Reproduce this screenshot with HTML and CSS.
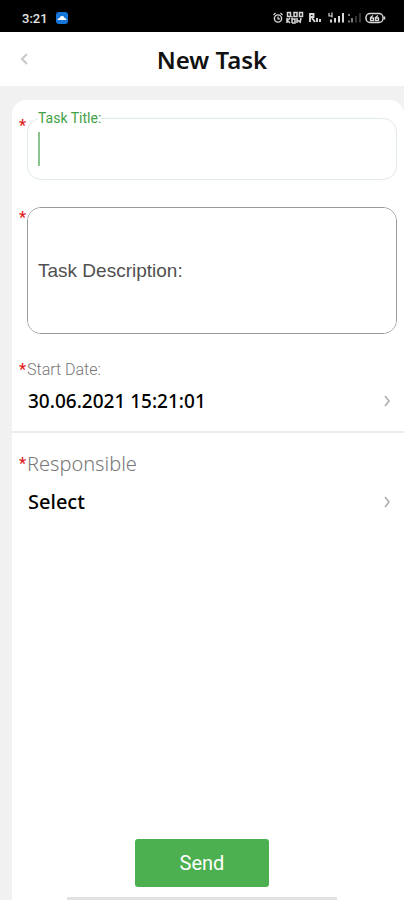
FILE: index.html
```html
<!DOCTYPE html>
<html lang="en">
<head>
<meta charset="UTF-8">
<meta name="viewport" content="width=device-width, initial-scale=1.0">
<title>New Task</title>
<link rel="stylesheet" href="styles.css">
</head>
<body>
    <div class="status-bar">
        <span class="clock">3:21</span>
        <svg class="app-icon" width="12" height="12" viewBox="0 0 12 12" aria-hidden="true">
            <rect width="12" height="12" rx="3" fill="#1675d8"/>
            <path d="M1.5 8 Q2 6 3.5 6 Q4.500 3.500 6.500 4 Q8 4.200 8.500 6 Q10.300 6.200 10.500 8 Z" fill="#fff"/>
        </svg>
        <svg class="status-icons" width="114" height="16" viewBox="0 0 114 16" fill="none" stroke="#d8d8d8" aria-hidden="true">
            <!-- alarm -->
            <circle cx="6" cy="8.500" r="3.600" stroke-width="1.400"/>
            <path d="M6 6.500v2.300h2M1.500 5l2-2M10.500 5l-2-2" stroke-width="1.200"/>
            <!-- network speed -->
            <g stroke-width="1.500">
                <rect x="15.500" y="2.500" width="3" height="4"/>
                <rect x="22" y="2.500" width="3" height="4"/>
                <rect x="27.500" y="2.500" width="3" height="4"/>
                <path d="M20 6v1.500M15 8v5M15 11l3-3M15 10l3 3M20 8v5M20 9h3v4h-3M25 8v5M25 11h3M29 8l-1 5"/>
            </g>
            <!-- call -->
            <path d="M38 3v9M38 4h3.500v3H38M40 8l3 4M45 8v4M48 9v3" stroke-width="1.900"/>
            <!-- signal -->
            <path d="M57 3v3h3M60 2.500v5" stroke-width="1.200"/>
            <path d="M59 9.500v3M63 8v4.500M67 6v6.500M71 3v9.500" stroke-width="2"/>
            <path d="M77 4v2M77 10.500v2M80 8v4.500" stroke-width="2" stroke="#777"/>
            <path d="M84 6v6.500M88 3v9.500" stroke-width="2" stroke="#333"/>
            <!-- battery -->
            <rect x="94" y="3.500" width="17" height="9" rx="4" stroke-width="1.500"/>
            <path d="M112.500 6.500v3" stroke-width="1.500"/>
            <path d="M101 5.500l-2.500 2v3h3v-2.500h-3M106 5.500l-2.500 2v3h3v-2.500h-3" stroke-width="1.300"/>
        </svg>
    </div>

    <header class="header">
        <button type="button" class="back" aria-label="Back">
            <svg width="8" height="14" viewBox="0 0 8 14" fill="none" stroke="#c8c8c8" stroke-width="2"><path d="M7 2L2 7l5 5"/></svg>
        </button>
        <h1>New Task</h1>
    </header>

    <main class="content">
        <form class="card">
            <div class="field">
                <span class="required">*</span>
                <fieldset class="title-box">
                    <legend><label for="taskTitle">Task Title:</label></legend>
                    <div class="title-line">
                        <span class="caret"></span>
                        <input type="text" id="taskTitle">
                    </div>
                </fieldset>
            </div>

            <div class="field field-description">
                <span class="required">*</span>
                <textarea class="description" aria-label="Task Description" placeholder="Task Description:"></textarea>
            </div>

            <div class="row row-date">
                <label class="row-label" for="startDate"><span class="required">*</span>Start Date:</label>
                <button type="button" id="startDate" class="row-value">
                    <span>30.06.2021 15:21:01</span>
                    <svg width="6" height="12" viewBox="0 0 6 12" fill="none" stroke="#aaa" stroke-width="1.500"><path d="M1 1l4 5-4 5"/></svg>
                </button>
            </div>

            <div class="row row-responsible">
                <label class="row-label" for="responsible"><span class="required">*</span>Responsible</label>
                <button type="button" id="responsible" class="row-value">
                    <span>Select</span>
                    <svg width="6" height="12" viewBox="0 0 6 12" fill="none" stroke="#aaa" stroke-width="1.500"><path d="M1 1l4 5-4 5"/></svg>
                </button>
            </div>

            <div class="footer">
                <button type="submit" class="send">Send</button>
                <div class="home-bar"></div>
            </div>
        </form>
    </main>
</body>
</html>
```
FILE: styles.css
```css
* {
    box-sizing: border-box;
}
body {
    margin: 0;
    min-height: 100vh;
    display: flex;
    flex-direction: column;
    font-family: Roboto, "Liberation Sans", sans-serif;
    background-color: #f1f1f1;
}
button {
    border: none;
    background: none;
    padding: 0;
    font-family: inherit;
    cursor: pointer;
}
.status-bar {
    height: 32px;
    padding: 4px 18px 0 22px;
    display: flex;
    align-items: center;
    gap: 8px;
    background-color: #000;
    color: #e4e4e4;
}
.clock {
    font-size: 13px;
    font-weight: 500;
}
.status-icons {
    margin-left: auto;
}
.header {
    height: 54px;
    padding: 0 16px;
    display: grid;
    grid-template-columns: 16px 1fr 16px;
    align-items: center;
    background-color: #fff;
}
.header h1 {
    margin: 0;
    padding-left: 20px;
    text-align: center;
    font-family: "Noto Sans", sans-serif;
    font-size: 24px;
    font-weight: 600;
    color: #111;
}
.back svg {
    display: block;
    margin: auto;
}
.content {
    flex: 1;
    display: flex;
    padding: 14px 0 0 12px;
}
.card {
    flex: 1;
    min-width: 0;
    display: flex;
    flex-direction: column;
    padding-top: 10px;
    border-radius: 14px 14px 0 0;
    background-color: #fff;
}
.field {
    display: grid;
    grid-template-columns: 8px 1fr;
    padding: 0 7px;
}
.required {
    color: #e02020;
    font-size: 16px;
    font-weight: 500;
    line-height: 20px;
}
.field .required {
    padding-top: 6px;
}
.title-box {
    min-width: 0;
    margin: 0;
    padding: 0 10px;
    border: 1px solid #dfeae6;
    border-radius: 14px;
}
.title-box legend {
    padding: 0;
    font-size: 14px;
    line-height: 16px;
    color: #3fa246;
}
.title-line {
    height: 53px;
    padding-bottom: 8px;
    display: flex;
    align-items: center;
}
.caret {
    width: 2px;
    height: 34px;
    background-color: #8cc48f;
}
.title-line input {
    flex: 1;
    min-width: 0;
    height: 34px;
    border: none;
    outline: none;
    background: none;
    font-family: inherit;
    font-size: 19px;
    caret-color: #4caf50;
}
.field-description {
    margin-top: 27px;
}
.field-description .required {
    padding-top: 1px;
}
.description {
    width: 100%;
    height: 127px;
    padding: 51px 10px;
    border: 1px solid #999;
    border-radius: 14px;
    outline: none;
    resize: none;
    font-family: "Liberation Sans", sans-serif;
    font-size: 19px;
    line-height: 24px;
}
.description::placeholder {
    color: #505050;
}
.row-label {
    display: flex;
    align-items: center;
    padding-left: 7px;
    font-weight: 300;
    color: #777;
}
.row-label .required {
    width: 8px;
    font-family: Roboto, sans-serif;
}
.row-value {
    width: 100%;
    padding: 0 14px 0 16px;
    display: flex;
    align-items: center;
    justify-content: space-between;
    font-family: "Noto Sans", sans-serif;
    font-size: 19px;
    font-weight: 500;
    line-height: 28px;
    color: #000;
}
.row-date {
    margin-top: 26px;
    padding-bottom: 16px;
    border-bottom: 2px solid #ececec;
}
.row-date .row-label {
    font-size: 16px;
    line-height: 20px;
}
.row-date .row-value {
    margin-top: 7px;
}
.row-responsible {
    padding-top: 17px;
}
.row-responsible .row-label {
    font-family: "Noto Sans", sans-serif;
    font-size: 20px;
    line-height: 28px;
}
.row-responsible .row-value {
    margin-top: 10px;
    font-size: 20px;
}
.footer {
    margin-top: auto;
    padding-right: 12px;
    display: flex;
    flex-direction: column;
    align-items: center;
    gap: 10px;
}
.send {
    width: 134px;
    height: 48px;
    border-radius: 3px;
    background-color: #4caf50;
    color: #fff;
    font-size: 20px;
}
.home-bar {
    width: 270px;
    height: 3px;
    background-color: #e2e2e2;
}
```
